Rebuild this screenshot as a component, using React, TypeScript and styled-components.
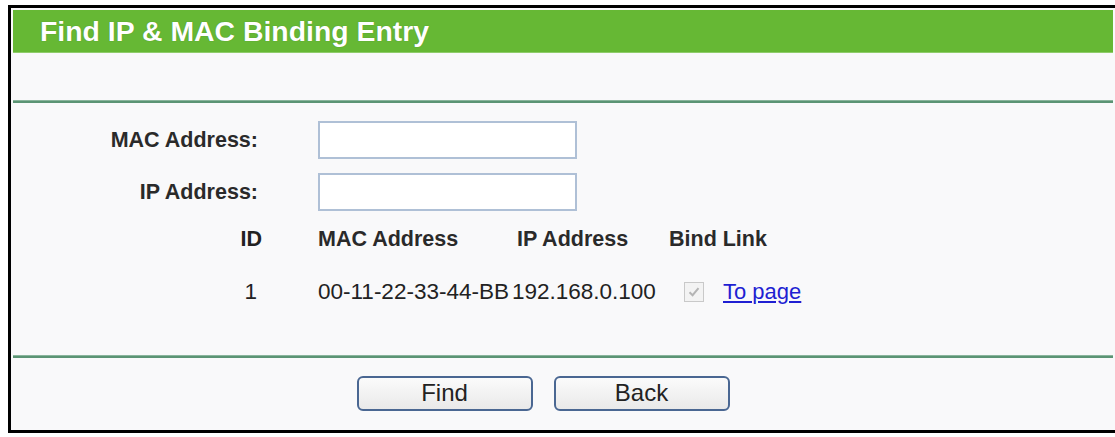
import * as React from 'react';
import styled, {createGlobalStyle} from 'styled-components';

const GlobalStyle = createGlobalStyle`
    html, body {
        margin: 0;
        padding: 0;
        background: #ffffff;
    }
    body {
        padding: 5px 1px 4px 8px;
        font-family: 'Liberation Sans', Arial, sans-serif;
    }
`;

interface Binding {
    id: number;
    mac: string;
    ip: string;
    bound: boolean;
}

const entries: Binding[] = [{id: 1, mac: '00-11-22-33-44-BB', ip: '192.168.0.100', bound: true}];

const App = () => {
    return (
        <>
            <GlobalStyle />
            <Frame>
                <Header>
                    <Title>Find IP &amp; MAC Binding Entry</Title>
                </Header>
                <Spacer />
                <Divider />
                <FormBody>
                    <FieldRow>
                        <Label>MAC Address:</Label>
                        <TextInput />
                    </FieldRow>
                    <FieldRow>
                        <Label>IP Address:</Label>
                        <TextInput />
                    </FieldRow>
                    <TableRow>
                        <IdCell bold>ID</IdCell>
                        <HeadCell>MAC Address</HeadCell>
                        <HeadCell shift={5}>IP Address</HeadCell>
                        <HeadCell>Bind Link</HeadCell>
                    </TableRow>
                    {entries.map((it) => (
                        <DataRow key={it.id}>
                            <IdCell>{it.id}</IdCell>
                            <DataCell>{it.mac}</DataCell>
                            <DataCell>{it.ip}</DataCell>
                            <DataCell>
                                <CheckBox>
                                    {it.bound && (
                                        <svg width="14" height="14" viewBox="0 0 14 14">
                                            <path
                                                d="M2.5 7.2 L5.6 10.2 L11.5 3.2"
                                                fill="none"
                                                stroke="#b4b4b4"
                                                strokeWidth="2"
                                            />
                                        </svg>
                                    )}
                                </CheckBox>
                                <PageLink href="#">To page</PageLink>
                            </DataCell>
                        </DataRow>
                    ))}
                </FormBody>
                <Divider />
                <ButtonBar>
                    <Button>Find</Button>
                    <Button>Back</Button>
                </ButtonBar>
            </Frame>
        </>
    );
};

const Frame = styled.div`
    width: 1100px;
    border: 3px solid #000000;
    padding: 2px;
    background: #f9f9fa;
    display: flex;
    flex-direction: column;
`;

const Header = styled.div`
    height: 43px;
    background-color: #66b834;
    border-bottom: 1px solid #8fcc6a;
    box-sizing: border-box;
    display: flex;
    align-items: center;
    padding-left: 27px;
`;

const Title = styled.h1`
    margin: 0;
    color: #ffffff;
    font-size: 28.4px;
    font-weight: bold;
    text-shadow: 0 0 1px rgba(40, 90, 20, 0.5);
`;

const Spacer = styled.div`
    height: 47px;
`;

const Divider = styled.div`
    height: 3px;
    background: #5b9474;
    border-top: 1px solid #8ab59c;
    box-sizing: border-box;
`;

const FormBody = styled.div`
    display: flex;
    flex-direction: column;
    padding: 18px 0 49px;
    gap: 14px;
    font-size: 22.5px;
    color: #222222;
`;

const FieldRow = styled.div`
    height: 38px;
    display: flex;
    align-items: center;
    gap: 60px;
`;

const Label = styled.span`
    width: 245px;
    text-align: right;
    font-size: 21.5px;
    font-weight: bold;
    color: #2a2a2a;
`;

const TextInput = styled.input`
    width: 259px;
    height: 38px;
    box-sizing: border-box;
    border: 2px solid #afc0d6;
    background: #ffffff;
    font-size: 18px;
    font-family: inherit;
    outline: none;
`;

const TableRow = styled.div`
    height: 28px;
    display: grid;
    grid-template-columns: 305px 194px 157px 1fr;
    align-items: center;
`;

const DataRow = styled(TableRow)`
    margin-top: 11px;
`;

const IdCell = styled.span<{bold?: boolean}>`
    text-align: right;
    padding-right: ${(props) => (props.bold ? 56 : 61)}px;
    font-size: ${(props) => (props.bold ? '21.5px' : 'inherit')};
    font-weight: ${(props) => (props.bold ? 'bold' : 'normal')};
`;

const HeadCell = styled.span<{shift?: number}>`
    font-size: 21.5px;
    font-weight: bold;
    padding-left: ${(props) => props.shift ?? 0}px;
    color: #2a2a2a;
`;

const DataCell = styled.span`
    display: flex;
    align-items: center;
    white-space: nowrap;
`;

const CheckBox = styled.span`
    width: 20px;
    height: 20px;
    box-sizing: border-box;
    margin-left: 15px;
    margin-right: 19px;
    border: 1px solid #c9c9c9;
    background: #f3f3f3;
    display: flex;
    align-items: center;
    justify-content: center;
`;

const PageLink = styled.a`
    font-size: 22px;
    color: #1f1fd2;
    text-decoration: underline;
`;

const ButtonBar = styled.div`
    height: 70px;
    display: flex;
    align-items: center;
    justify-content: center;
    gap: 21px;
    padding-right: 40px;
`;

const Button = styled.button`
    width: 176px;
    height: 35px;
    border: 2px solid #4a6792;
    border-radius: 6px;
    background: linear-gradient(#fbfbfb, #e9e9e9);
    font-family: 'Liberation Sans', Arial, sans-serif;
    font-size: 24px;
    color: #222222;
    padding: 0;
`;

export default App;
